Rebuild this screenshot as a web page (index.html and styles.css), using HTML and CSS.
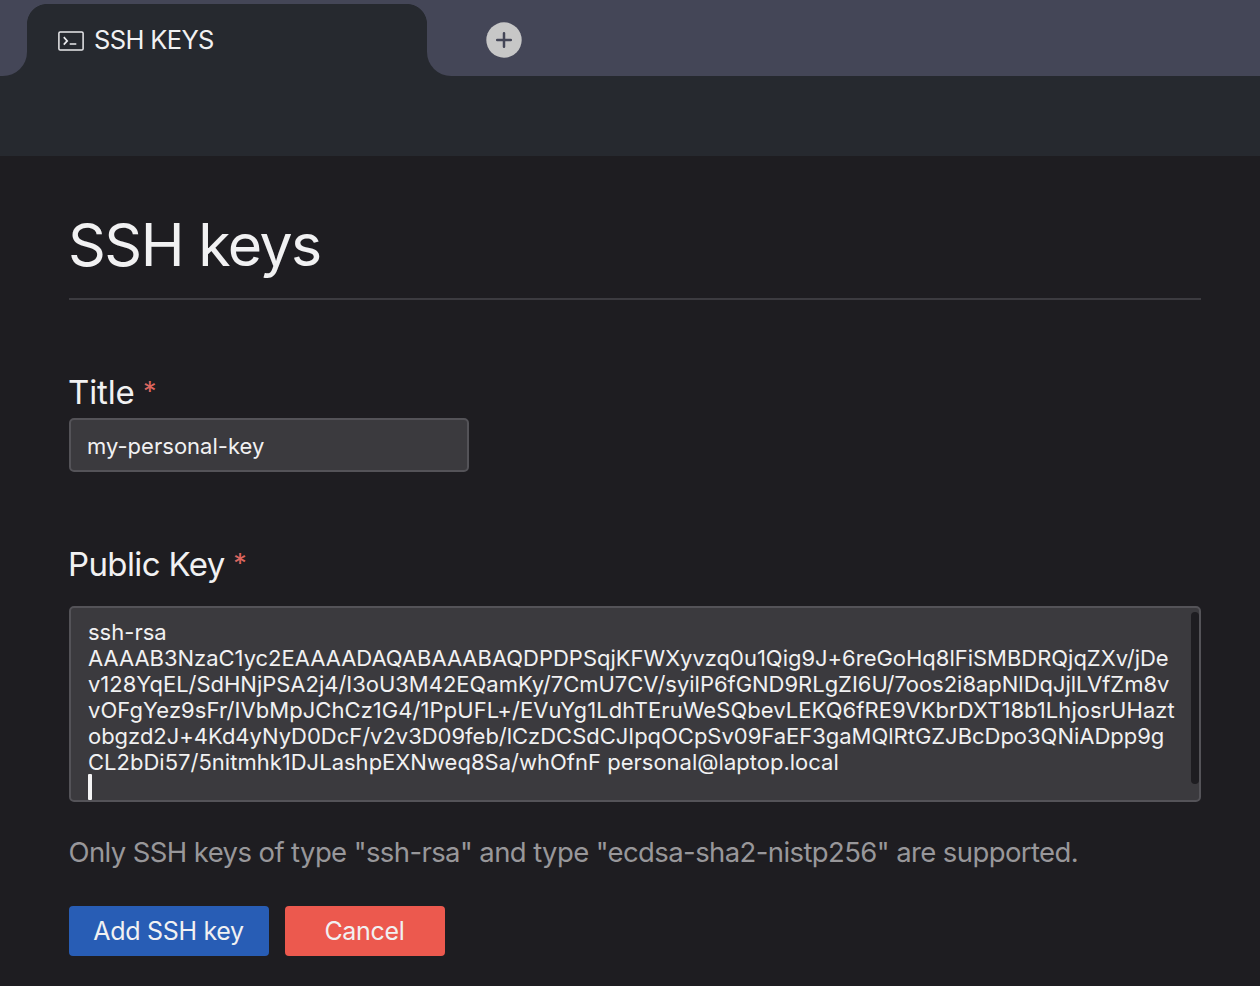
FILE: index.html
```html
<!DOCTYPE html>
<html lang="en">
<head>
<meta charset="utf-8">
<title>SSH keys</title>
<link rel="stylesheet" href="styles.css">
</head>
<body>
<header class="tabbar">
  <div class="edge edge-left"></div>
  <div class="tab">
    <svg class="tab-icon" viewBox="0 0 26 20" width="26" height="20" fill="none" stroke="#e9e9ec">
      <rect x=".9" y=".9" width="24.2" height="18.2" rx="1.3" stroke-width="1.5"/>
      <path d="M5.8 6.2 9.2 9.9 5.8 13.6M11.7 13h6.6" stroke-width="1.7"/>
    </svg>
    <span class="tab-label">SSH KEYS</span>
  </div>
  <div class="edge edge-right">
    <svg class="add" viewBox="0 0 36 36" width="36" height="36">
      <circle cx="18" cy="18" r="17.7" fill="#c7c7c7"/>
      <path d="M18 11.2v13.6M11.2 18h13.6" stroke="#444657" stroke-width="2.5" stroke-linecap="round"/>
    </svg>
  </div>
</header>
<div class="toolbar"></div>
<main class="page">
  <h1 class="heading"><span>SSH keys</span></h1>
  <div class="label label-title"><span class="name-title">Title</span><span class="star">*</span></div>
  <div class="input"><span>my-personal-key</span></div>
  <div class="label label-key"><span class="name-key">Public Key</span><span class="star">*</span></div>
  <div class="textarea">
    <div class="lines">
      <div><span>ssh-rsa</span></div>
      <div class="tight"><span>AAAAB3NzaC1yc2EAAAADAQABAAABAQDPDPSqjKFWXyvzq0u1Qig9J+6reGoHq8lFiSMBDRQjqZXv/jDe</span></div>
      <div class="tight"><span>v128YqEL/SdHNjPSA2j4/I3oU3M42EQamKy/7CmU7CV/syilP6fGND9RLgZI6U/7oos2i8apNlDqJjlLVfZm8v</span></div>
      <div class="loose"><span>vOFgYez9sFr/IVbMpJChCz1G4/1PpUFL+/EVuYg1LdhTEruWeSQbevLEKQ6fRE9VKbrDXT18b1LhjosrUHazt</span></div>
      <div class="tight"><span>obgzd2J+4Kd4yNyD0DcF/v2v3D09feb/lCzDCSdCJIpqOCpSv09FaEF3gaMQlRtGZJBcDpo3QNiADpp9g</span></div>
      <div><span>CL2bDi57/5nitmhk1DJLashpEXNweq8Sa/whOfnF personal@laptop.local</span></div>
      <div class="caret"></div>
    </div>
    <div class="scrollbar"></div>
  </div>
  <p class="note"><span>Only SSH keys of type "ssh-rsa" and type "ecdsa-sha2-nistp256" are supported.</span></p>
  <div class="actions">
    <button class="button primary"><span>Add SSH key</span></button>
    <button class="button danger"><span>Cancel</span></button>
  </div>
</main>
</body>
</html>
```
FILE: styles.css
```css
* { box-sizing: border-box; }
body {
  margin: 0;
  height: 986px;
  overflow: hidden;
  background: #1e1d21;
  color: #f1f1f2;
  font-family: Inter, "Liberation Sans", sans-serif;
}
.tabbar { display: flex; height: 76px; background: #26292f; }
.edge { background: #444657; }
.edge-left { width: 27px; border-bottom-right-radius: 24px; }
.edge-right {
  flex: 1;
  padding: 22px 0 0 59px;
  border-bottom-left-radius: 24px;
}
.add { display: block; }
.tab {
  display: flex;
  width: 400px;
  padding: 31px 0 0 31px;
  background: radial-gradient(circle at 20px 24px, #26292f 19.6px, #444657 20.4px) 0 0 / 20px 24px no-repeat,
    radial-gradient(circle at 0 24px, #26292f 19.6px, #444657 20.4px) 100% 0 / 20px 24px no-repeat,
    linear-gradient(#444657 4px, #26292f 4px);
}
.tab-icon { margin-right: 10px; }
.tab-label { font-size: 25.5px; line-height: 30px; margin-top: -6px; letter-spacing: -.65px; }
.toolbar { height: 80px; background: #26292f; }
.page { padding: 50px 59px 0 69px; }
.heading {
  height: 94px;
  margin: 0;
  border-bottom: 2px solid #3c3b40;
  font-size: 59px;
  line-height: 78px;
  font-weight: 400;
  letter-spacing: -1.5px;
  text-indent: -1px;
}
.label { display: flex; margin-left: -1px; font-size: 33px; line-height: 40px; }
.label-title { margin-top: 72px; }
.label-key { margin-top: 72px; }
.name-title { letter-spacing: -.15px; }
.name-key { letter-spacing: -.62px; }
.star { margin-left: 8.5px; font-size: 27px; line-height: 40px; color: #dc665f; }
.input {
  width: 400px;
  height: 54px;
  margin-top: 6px;
  padding-left: 16px;
  border: 2px solid #545358;
  border-radius: 5px;
  background: #3b3a3e;
  font-size: 22px;
  line-height: 52px;
  letter-spacing: .02px;
}
.textarea {
  display: flex;
  justify-content: space-between;
  height: 196px;
  margin-top: 22px;
  padding: 11px 0 0 17px;
  border: 2px solid #545358;
  border-radius: 5px;
  background: #3b3a3e;
}
.lines { white-space: nowrap; font-size: 22px; line-height: 26px; letter-spacing: .01px; }
.tight { letter-spacing: -.02px; }
.loose { letter-spacing: .06px; }
.caret { width: 4px; height: 26px; border-radius: 1px; background: #f4f4f5; margin-top: -1px; }
.scrollbar { width: 8px; height: 172px; margin-top: -7px; border-radius: 4px; background: #1e1d21; }
.note { margin: 34px 0 0; font-size: 27.5px; line-height: 32px; color: #98979a; white-space: nowrap; letter-spacing: -.6px; text-indent: -.5px; }
.actions { display: flex; gap: 16px; margin-top: 38px; }
.button {
  height: 50px;
  padding: 0 1px 0 0;
  border: 0;
  border-radius: 4px;
  color: #f1f1f2;
  font: 400 25px/50px Inter, "Liberation Sans", sans-serif;
  letter-spacing: -.3px;
}
.primary { width: 200px; background: #285db5; }
.danger { width: 160px; background: #ec594e; }
```
